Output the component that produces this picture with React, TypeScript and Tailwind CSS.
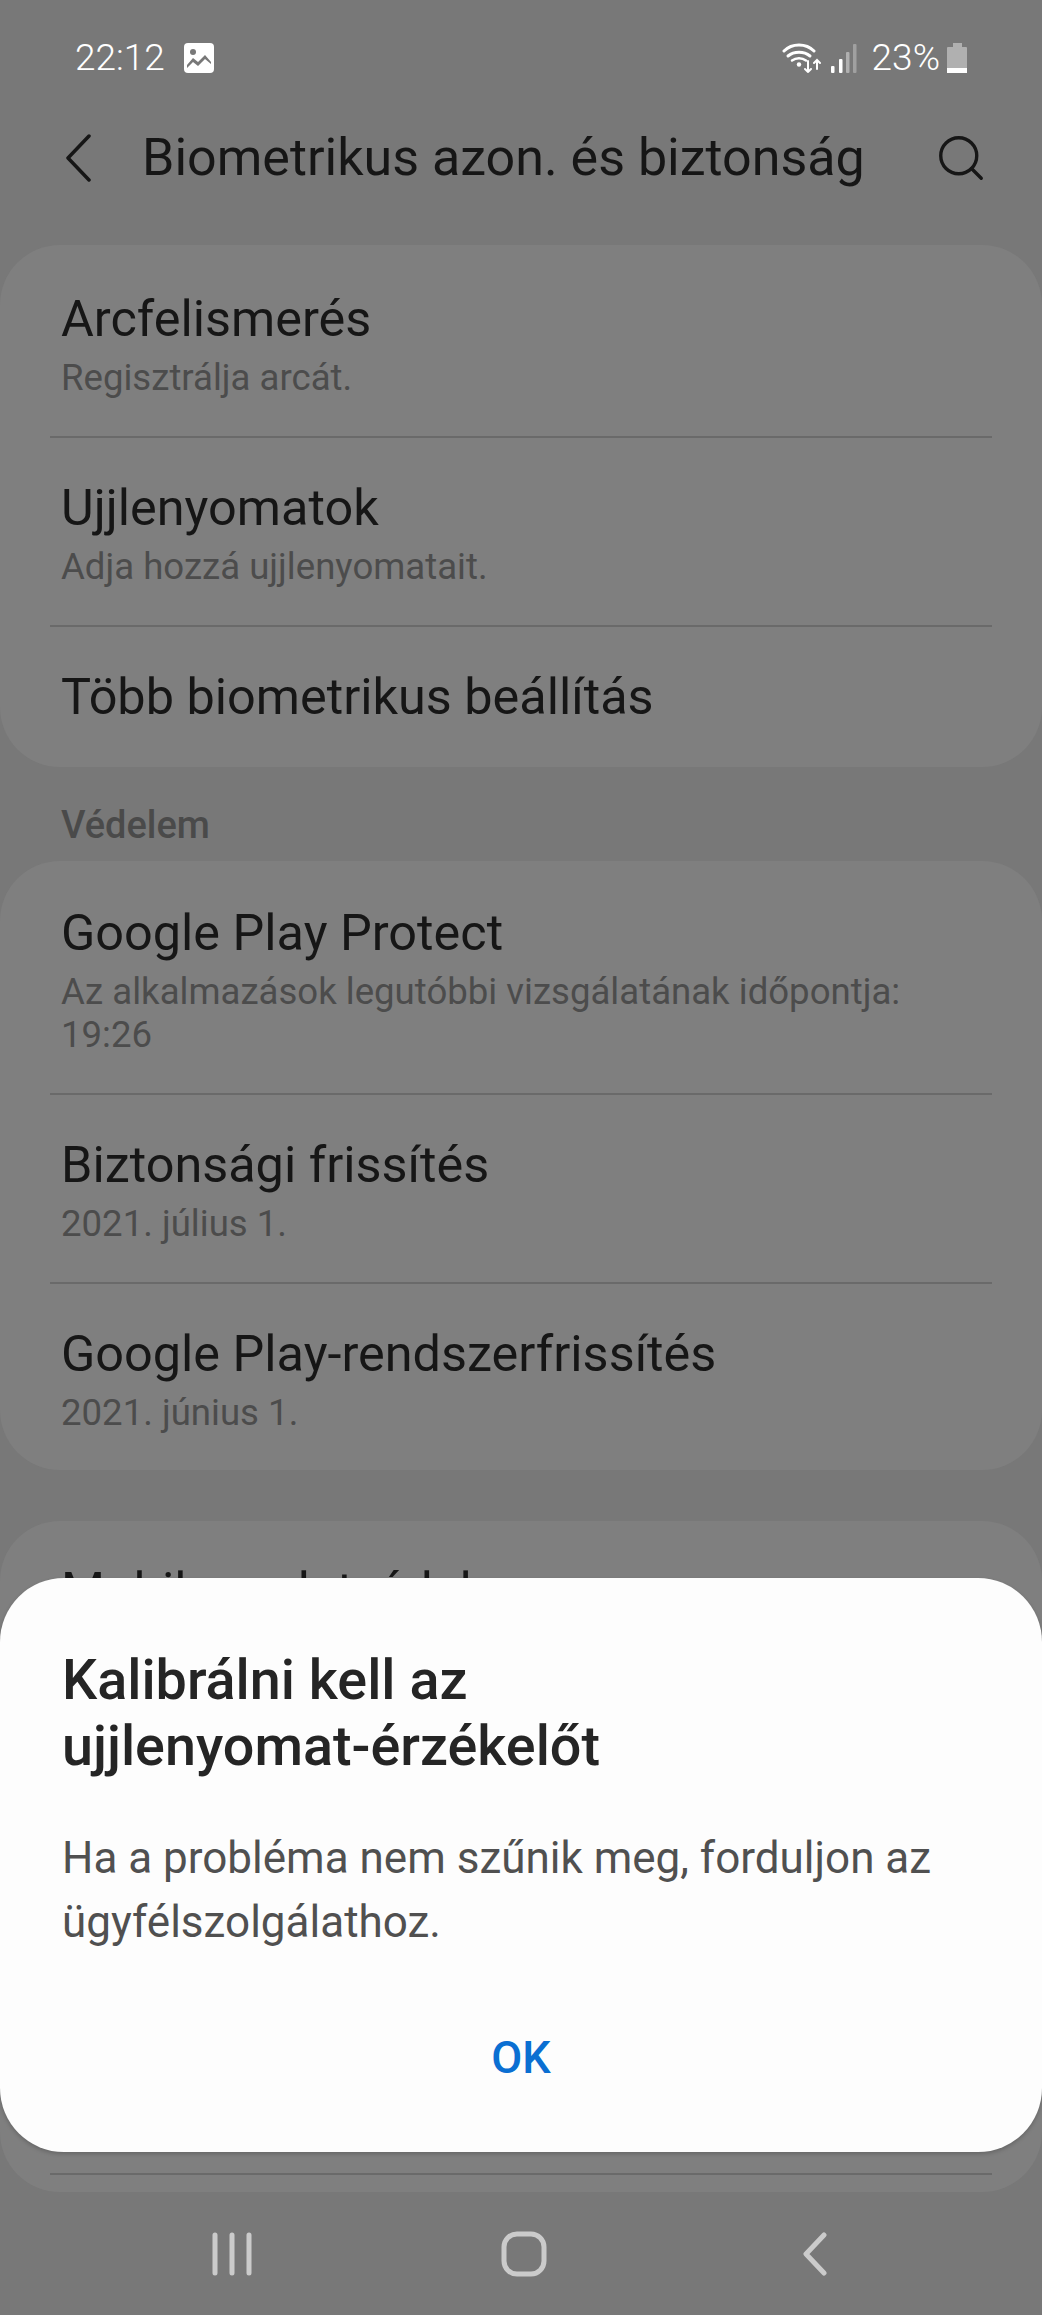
import { Search } from "lucide-react";

const font = "font-['Roboto',sans-serif]";

type RowProps = {
  title: string;
  sub?: string;
  divider?: boolean;
  tight?: boolean;
};

function Row({ title, sub, divider = true, tight = false }: RowProps) {
  return (
    <div className={`relative px-[61px] pt-[39px] ${tight ? "pb-[36px]" : "pb-[39px]"}`}>
      <div className="text-[50.4px] leading-[62px] text-[#161616] whitespace-nowrap">{title}</div>
      {sub && <div className="mt-[6px] text-[36.6px] leading-[43px] text-[#4c4c4c]">{sub}</div>}
      {divider && <div className="absolute left-[50px] right-[50px] bottom-0 h-[2px] bg-[#6a6a6a]" />}
    </div>
  );
}

function StatusIcons() {
  return (
    <div className="flex items-center">
      {/* wifi with up/down arrows */}
      <svg width="39" height="30" viewBox="0 0 39 30" fill="none" stroke="#fff" strokeLinecap="round">
        <path d="M2 8 C10 0 24 0 32 8" strokeWidth="3" />
        <path d="M6 13 C12 8 22 8 28 13" strokeWidth="3" />
        <path d="M10 17.5 C14 14.5 20 14.5 24 17.5" strokeWidth="2.5" />
        <circle cx="17" cy="21.5" r="2.2" fill="#fff" stroke="none" />
        <path d="M26 18 V29 M23 26 L26 29 L29 26" strokeWidth="2" />
        <path d="M35 26 V17 M32 20 L35 17 L38 20" strokeWidth="2" />
      </svg>
      {/* signal bars */}
      <svg className="ml-[10px]" width="26" height="30" viewBox="0 0 26 30">
        <rect x="0" y="23" width="3.5" height="7" rx="1" fill="#fff" />
        <rect x="8" y="16" width="3.5" height="14" rx="1" fill="#fff" />
        <rect x="15" y="9" width="3.5" height="21" rx="1" fill="#b0b0b0" />
        <rect x="22" y="1" width="3.5" height="29" rx="1" fill="#a0a0a0" />
      </svg>
      <span className="ml-[15px] text-[37px] leading-[40px] font-light text-white">23%</span>
      {/* battery */}
      <svg className="ml-[7px]" width="20" height="30" viewBox="0 0 20 30">
        <path d="M6 0 H15 V4 H19 Q20 4 20 5 V30 H0 V5 Q0 4 1 4 H6 Z" fill="#b0b0b0" />
        <rect x="0" y="25" width="20" height="5" fill="#fff" />
      </svg>
    </div>
  );
}

export default function App() {
  return (
    <div className={`${font} relative w-[1042px] h-[2315px] overflow-hidden bg-[#787878]`}>
      {/* Status bar */}
      <div className="flex items-center justify-between pl-[75px] pr-[75px] pt-[38px] h-[78px]">
        <div className="flex items-center">
          <span className="text-[37px] leading-[40px] font-light text-white">22:12</span>
          <svg className="ml-[19px]" width="30" height="30" viewBox="0 0 30 30">
            <rect width="30" height="30" rx="4" fill="#fff" />
            <circle cx="9" cy="9" r="3" fill="#787878" />
            <path d="M3 22 L9 15 L14 19 L21 12 L27 19 V21 L21 16 L14 23 L9 19 L3 25 Z" fill="#787878" />
          </svg>
        </div>
        <StatusIcons />
      </div>

      {/* Header */}
      <div className="flex items-center h-[88px] mt-[36px] pl-[64px] pr-[54px]">
        <svg width="28" height="48" viewBox="0 0 28 48" fill="none" stroke="#161616" strokeWidth="3.5" strokeLinecap="round" strokeLinejoin="round">
          <path d="M25 2 L4 24 L25 46" />
        </svg>
        <h1 className="ml-[50px] text-[52px] leading-[60px] font-normal text-[#161616] whitespace-nowrap">
          Biometrikus azon. és biztonság
        </h1>
        <Search className="ml-auto text-[#161616]" size={54} strokeWidth={1.5} />
      </div>

      {/* Biometrics */}
      <div className="mt-[43px] rounded-[60px] bg-[#7f7f7f] pt-[4px]">
        <Row title="Arcfelismerés" sub="Regisztrálja arcát." />
        <Row title="Ujjlenyomatok" sub="Adja hozzá ujjlenyomatait." />
        <Row title="Több biometrikus beállítás" divider={false} />
      </div>

      <div className="mt-[36px] h-[58px] px-[61px] text-[38px] leading-[44px] font-medium text-[#4a4a4a]">Védelem</div>

      {/* Protection */}
      <div className="rounded-[60px] bg-[#7f7f7f] pt-[2px]">
        <Row title="Google Play Protect" sub="Az alkalmazások legutóbbi vizsgálatának időpontja: 19:26" />
        <Row title="Biztonsági frissítés" sub="2021. július 1." />
        <Row title="Google Play-rendszerfrissítés" sub="2021. június 1." divider={false} tight />
      </div>

      {/* Card behind the dialog */}
      <div className="mt-[51px] h-[671px] rounded-[60px] bg-[#7f7f7f] relative">
        <Row title="Mobilos adatvédelem" divider={false} />
        <div className="absolute left-[50px] right-[50px] bottom-[17px] h-[2px] bg-[#6a6a6a]" />
      </div>

      {/* Dialog */}
      <div className="absolute left-0 right-0 top-[1578px] h-[574px] rounded-[64px] bg-[#fdfdfd] shadow-[0_2px_4px_rgba(0,0,0,0.2)] px-[62px] pt-[69px]">
        <h2 className="text-[55.7px] leading-[66px] font-medium text-[#252525]">
          Kalibrálni kell az
          <br />
          ujjlenyomat-érzékelőt
        </h2>
        <p className="mt-[47px] text-[44px] leading-[64px] text-[#505050]">
          Ha a probléma nem szűnik meg, forduljon az
          <br />
          ügyfélszolgálathoz.
        </p>
        <div className="mt-[74px] text-center text-[45px] leading-[60px] font-medium text-[#0a6fd2]">OK</div>
      </div>

      {/* Navigation bar */}
      <div className="absolute left-0 right-0 bottom-0 h-[123px] bg-[#787878] flex items-center">
        <div className="w-full relative h-[44px]">
          <svg className="absolute left-[211px] top-0" width="44" height="44" viewBox="0 0 44 44" fill="none" stroke="#cbcbcb" strokeWidth="5" strokeLinecap="round">
            <path d="M4 3 V41 M21 3 V41 M38 3 V41" />
          </svg>
          <svg className="absolute left-[501px] top-[-1px]" width="46" height="46" viewBox="0 0 46 46" fill="none" stroke="#cbcbcb" strokeWidth="5">
            <rect x="3" y="3" width="40" height="40" rx="13" />
          </svg>
          <svg className="absolute left-[802px] top-0" width="26" height="44" viewBox="0 0 26 44" fill="none" stroke="#cbcbcb" strokeWidth="5" strokeLinecap="round" strokeLinejoin="round">
            <path d="M22 3 L4 22 L22 41" />
          </svg>
        </div>
      </div>
    </div>
  );
}
